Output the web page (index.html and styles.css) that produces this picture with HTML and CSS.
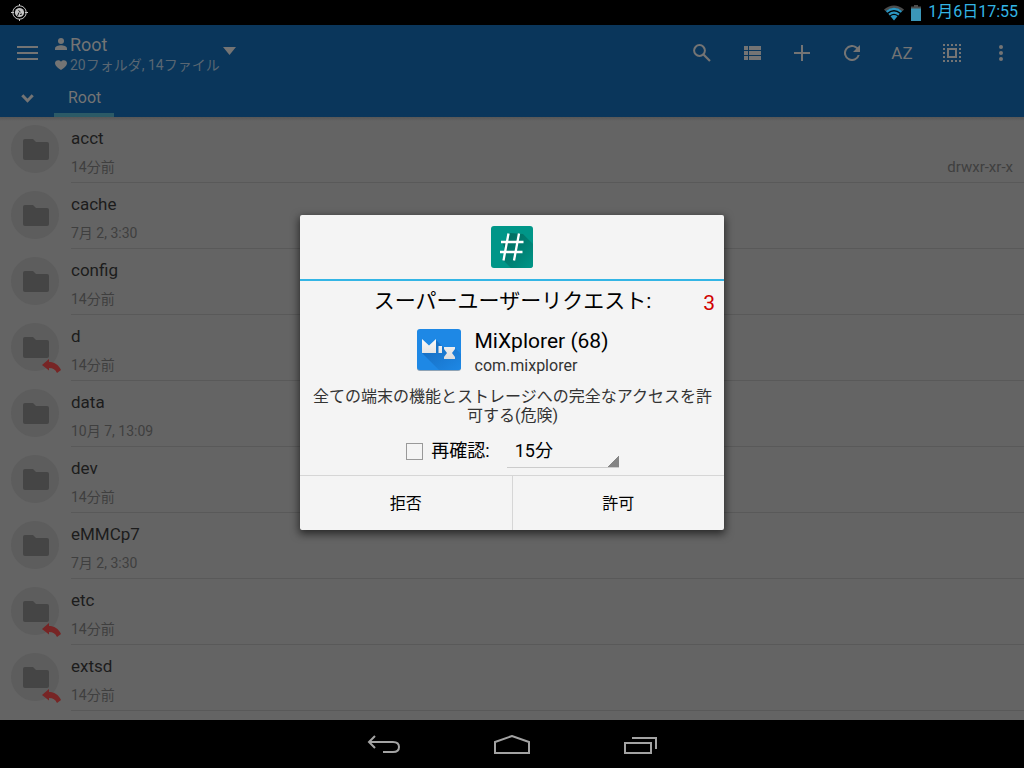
FILE: index.html
```
<!DOCTYPE html>
<html lang="ja">
<head>
<meta charset="utf-8">
<meta name="viewport" content="width=device-width, initial-scale=1">
<title>MiXplorer</title>
<link rel="stylesheet" href="styles.css">
</head>
<body>
<svg class="sprite" aria-hidden="true">
  <symbol id="folder" viewBox="0 0 26 21"><path d="M2 0h8l3 3h11q2 0 2 2v14q0 2-2 2H2q-2 0-2-2V2q0-2 2-2z"/></symbol>
  <symbol id="link" viewBox="0 0 19 14"><path d="M0 6 7 0v3c5 0 9.500 2.500 12 8l-4 3C13.500 10.500 11 9 7 9v2.500z"/></symbol>
</svg>

<header class="status">
  <svg class="status-logo" viewBox="0 0 17 17" fill="none" stroke="#c4c4c4"><circle cx="8.500" cy="8.500" r="6.700"/><path d="M0 8.500h3M14 8.500h3M8.500 0v2M8.500 15v2"/><circle cx="8.500" cy="8.500" r="4.600" fill="#c4c4c4" stroke="none"/><path d="M6.500 12 8 8.500M7.500 6.500l2 1.500M9 10.500l2-.5" stroke="#111"/></svg>
  <div class="status-right">
    <svg class="wifi" viewBox="0 0 20 16"><path d="M0 4.500Q10-3.500 20 4.500L18.500 6.300Q10 0 1.500 6.300z" fill="#4c4c4c"/><g fill="none" stroke="#2a95c0" stroke-width="2.200"><path d="M2.500 6.800q7.500-6 15 0M5 9.700q5-4 10 0"/></g><path d="M6.500 11.300q3.500-2.500 7 0L10 15.500z" fill="#2a95c0"/></svg>
    <svg class="battery" viewBox="0 0 10 16"><path d="M3 0h4v1.500h3V4H0V1.500h3z" fill="#4c4c4c"/><path d="M0 3.500h10V16H0z" fill="#3b96b8"/></svg>
    <time class="clock">1月6日17:55</time>
  </div>
</header>

<div class="stage">
  <main class="app">
    <div class="topbar">
      <div class="toolbar">
        <button class="menu" aria-label="メニュー"><svg viewBox="0 0 21 14" width="21" height="14"><path d="M0 0h21v2H0zM0 6h21v2H0zM0 12h21v2H0z"/></svg></button>
        <button class="location">
          <span class="location-lines">
            <span class="location-name"><svg viewBox="0 0 12 14" width="12" height="14"><circle cx="6" cy="3" r="3"/><path d="M0 12v-1.500C0 8.300 3.500 7.200 6 7.200s6 1.100 6 3.300V12z"/></svg>Root</span>
            <span class="location-info"><svg viewBox="0 0 12 10" width="12" height="10"><path d="M6 10C3 8 0 5.800 0 3 0 .2 4-1 6 1.700 8-1 12 .2 12 3c0 2.800-3 5-6 7z"/></svg>20フォルダ, 14ファイル</span>
          </span>
          <svg class="caret" viewBox="0 0 13 8" width="13" height="8"><path d="M0 0h13L6.500 8z"/></svg>
        </button>
        <div class="actions">
          <button aria-label="検索"><svg viewBox="0 0 18 18" width="18" height="18"><circle cx="6.500" cy="6.500" r="5.400" fill="none" stroke="currentColor" stroke-width="2"/><path d="m10.500 10.500 6.500 6.500" stroke="currentColor" stroke-width="2.200"/></svg></button>
          <button aria-label="表示"><svg viewBox="0 0 17 14" width="17" height="14"><path d="M0 0h4v4H0zM5 0h12v4H5zM0 5h4v4H0zM5 5h12v4H5zM0 10h4v4H0zM5 10h12v4H5z"/></svg></button>
          <button aria-label="追加"><svg viewBox="0 0 16 16" width="16" height="16"><path d="M7 0h2v7h7v2H9v7H7V9H0V7h7z"/></svg></button>
          <button aria-label="更新"><svg viewBox="4 4 16 16" width="16" height="16"><path d="M17.650 6.350A8 8 0 1 0 19.730 14h-2.080A6 6 0 1 1 12 6c1.660 0 3.140.69 4.220 1.780L13 11h7V4z"/></svg></button>
          <button class="sort" aria-label="並べ替え">AZ</button>
          <button aria-label="選択"><svg viewBox="0 0 18 18" width="18" height="18"><path d="M0 1h18M0 17h18" fill="none" stroke="currentColor" stroke-width="2" stroke-dasharray="2"/><path d="M1 4v12M17 4v12" fill="none" stroke="currentColor" stroke-width="2" stroke-dasharray="2"/><path d="M5 5h8v8H5z" fill="none" stroke="currentColor" stroke-width="2"/></svg></button>
          <button class="more" aria-label="その他"><svg viewBox="0 0 4 16" width="4" height="16"><circle cx="2" cy="2" r="2"/><circle cx="2" cy="8" r="2"/><circle cx="2" cy="14" r="2"/></svg></button>
        </div>
      </div>
      <nav class="tabs">
        <button class="expand" aria-label="タブ一覧"><svg viewBox="0 0 13 9" width="13" height="9"><path d="m1.300 1.300 5.200 5.400 5.200-5.400" fill="none" stroke="currentColor" stroke-width="3"/></svg></button>
        <a class="tab" href="#root">Root</a>
      </nav>
    </div>
    <ul class="files">
      <li class="file"><span class="badge"><svg class="folder"><use href="#folder"/></svg></span><div class="details"><span class="name">acct</span><div class="meta"><span>14分前</span><span class="mode">drwxr-xr-x</span></div></div></li>
      <li class="file"><span class="badge"><svg class="folder"><use href="#folder"/></svg></span><div class="details"><span class="name">cache</span><div class="meta"><span>7月 2, 3:30</span></div></div></li>
      <li class="file"><span class="badge"><svg class="folder"><use href="#folder"/></svg></span><div class="details"><span class="name">config</span><div class="meta"><span>14分前</span></div></div></li>
      <li class="file"><span class="badge"><svg class="folder"><use href="#folder"/></svg><svg class="link"><use href="#link"/></svg></span><div class="details"><span class="name">d</span><div class="meta"><span>14分前</span></div></div></li>
      <li class="file"><span class="badge"><svg class="folder"><use href="#folder"/></svg></span><div class="details"><span class="name">data</span><div class="meta"><span>10月 7, 13:09</span></div></div></li>
      <li class="file"><span class="badge"><svg class="folder"><use href="#folder"/></svg></span><div class="details"><span class="name">dev</span><div class="meta"><span>14分前</span></div></div></li>
      <li class="file"><span class="badge"><svg class="folder"><use href="#folder"/></svg></span><div class="details"><span class="name">eMMCp7</span><div class="meta"><span>7月 2, 3:30</span></div></div></li>
      <li class="file"><span class="badge"><svg class="folder"><use href="#folder"/></svg><svg class="link"><use href="#link"/></svg></span><div class="details"><span class="name">etc</span><div class="meta"><span>14分前</span></div></div></li>
      <li class="file"><span class="badge"><svg class="folder"><use href="#folder"/></svg><svg class="link"><use href="#link"/></svg></span><div class="details"><span class="name">extsd</span><div class="meta"><span>14分前</span></div></div></li>
    </ul>
  </main>

  <div class="overlay">
    <form class="dialog" role="dialog" aria-labelledby="request-title">
      <div class="dialog-head">
        <svg viewBox="0 0 42 42" width="42" height="42">
          <defs><linearGradient id="hash-shade" x1="0" y1="0" x2="1" y2="1"><stop offset=".2" stop-color="#00665a"/><stop offset="1" stop-color="#009688"/></linearGradient></defs>
          <rect width="42" height="42" rx="3" fill="#009688"/>
          <path d="M19 7 32 8 42 18v21q0 3-3 3H20L11 33l4-8-4-9h5z" fill="url(#hash-shade)" opacity=".8"/>
          <path d="M17.500 7.500 12.500 34.500M28 7.500 23 34.500M10 16h22.500M9 26h22.500" fill="none" stroke="#fff" stroke-width="2.300"/>
        </svg>
      </div>
      <div class="dialog-body">
        <div class="request">
          <h1 id="request-title">スーパーユーザーリクエスト:</h1>
          <span class="count">3</span>
        </div>
        <div class="requester">
          <svg viewBox="0 0 44 42" width="44" height="42">
            <defs>
              <linearGradient id="mix-shade" x1="0" y1="0" x2="1" y2="1"><stop offset=".2" stop-color="#166fc4"/><stop offset="1" stop-color="#1e88e5"/></linearGradient>
              <linearGradient id="mix-letters" x1="0" y1="0" x2="0" y2="1"><stop stop-color="#fafafa"/><stop offset="1" stop-color="#dcdcdc"/></linearGradient>
            </defs>
            <rect y="1" width="44" height="41" rx="3" fill="#8fa3b5"/>
            <rect width="44" height="41" rx="3" fill="#1e88e5"/>
            <path d="M19 11 26 18l12 1 6 6v13q0 3-3 3H22L5 24z" fill="url(#mix-shade)"/>
            <path d="M5 10 12 16.500 19 10v14H5zM21.500 17h3.500v7h-3.500zM27 18h11v2l-3 4 3 4v2H27v-2l3-4-3-4z" fill="url(#mix-letters)"/>
          </svg>
          <div><div class="app-name">MiXplorer (68)</div><div class="package">com.mixplorer</div></div>
        </div>
        <p class="message">全ての端末の機能とストレージへの完全なアクセスを許可する(危険)</p>
        <div class="options">
          <label class="confirm"><input type="checkbox">再確認:</label>
          <select class="duration" aria-label="期間"><option>15分</option></select>
        </div>
      </div>
      <div class="dialog-actions">
        <button type="button">拒否</button>
        <button type="button">許可</button>
      </div>
    </form>
  </div>
</div>

<footer class="navbar">
  <button aria-label="戻る"><svg viewBox="0 0 36 20" width="36" height="20"><path d="M9 1 3 7l6 6M3 7h24q6 0 6 5t-6 5H17"/></svg></button>
  <button aria-label="ホーム"><svg viewBox="0 0 36 20" width="36" height="20"><path d="M1 18V7l17-6 17 6v11z"/></svg></button>
  <button aria-label="履歴"><svg viewBox="0 0 36 20" width="36" height="20"><path d="M3 8h26v10H3zM10 3h24v11"/></svg></button>
</footer>
</body>
</html>
```
FILE: styles.css
```
* { box-sizing: border-box; }

body {
  margin: 0;
  height: 100vh;
  display: flex;
  flex-direction: column;
  background: #000;
  font-family: Roboto, "Noto Sans CJK JP", sans-serif;
  font-size: 16px;
  overflow: hidden;
}

button {
  border: 0;
  padding: 0;
  background: none;
  color: inherit;
  font: inherit;
}

svg { display: block; }
.sprite { display: none; }

/* System status bar */
.status {
  height: 25px;
  flex: none;
  display: flex;
  justify-content: space-between;
  align-items: center;
  padding: 0 6px 0 11px;
}
.status-logo { width: 17px; height: 17px; }
.status-right { display: flex; align-items: center; gap: 7px; }
.wifi { width: 20px; height: 16px; }
.battery { width: 10px; height: 16px; }
.clock { color: #33b5e5; line-height: 22px; height: 24px; }

.stage {
  flex: 1;
  min-height: 0;
  position: relative;
  display: flex;
}

/* File manager */
.app {
  flex: 1;
  overflow: hidden;
  background: #646464;
}
.topbar {
  background: #0a365b;
  color: #747474;
  fill: currentColor;
}
.toolbar { display: flex; height: 55px; align-items: center; }
.menu {
  width: 55px;
  height: 55px;
  padding: 0 0 0 17px;
}
.location { display: flex; align-items: center; gap: 3px; text-align: left; }
.location-lines { display: grid; padding-top: 5px; }
.location-name,
.location-info { display: flex; align-items: center; gap: 3px; line-height: 20px; }
.location-name { font-size: 18px; }
.location-info { font-size: 14px; color: #596672; }
.location-info svg { fill: #747474; }
.caret { margin-bottom: 4px; }
.actions { display: flex; margin-left: auto; }
.actions button {
  width: 50px;
  height: 55px;
  display: flex;
  align-items: center;
  justify-content: center;
}
.actions .sort { font-size: 17px; }
.actions .more { width: 47px; }

.tabs { display: flex; height: 37px; }
.expand {
  width: 54px;
  display: flex;
  align-items: center;
  justify-content: center;
}
.tab {
  padding: 0 13px 0 14px;
  border-bottom: 4px solid #2c5a66;
  color: inherit;
  line-height: 36px;
  text-decoration: none;
}

.files {
  margin: 0;
  padding: 0;
  list-style: none;
  background: linear-gradient(#575757, #646464 4px);
}
.file { display: flex; gap: 12px; padding-left: 11px; }
.badge {
  position: relative;
  width: 48px;
  height: 48px;
  margin-top: 8px;
  padding-left: 1px;
  border-radius: 50%;
  background: #5d5d5d;
  display: flex;
  align-items: center;
  justify-content: center;
}
.folder { width: 26px; height: 21px; fill: #454545; }
.link {
  position: absolute;
  right: -2px;
  bottom: -2px;
  width: 19px;
  height: 14px;
  fill: #772525;
}
.details {
  flex: 1;
  height: 66px;
  padding: 10px 11px 0 0;
  border-bottom: 1px solid #595959;
}
.name {
  display: block;
  margin-bottom: 7px;
  color: #1c1c1c;
  font-size: 17px;
  line-height: 22px;
}
.meta {
  display: flex;
  justify-content: space-between;
  color: #3f3f3f;
  font-size: 14px;
  line-height: 22px;
}
.mode { font-size: 15px; }

/* Superuser request */
.overlay {
  position: absolute;
  inset: 0;
  display: flex;
  align-items: center;
  justify-content: center;
}
.dialog {
  width: 424px;
  max-width: 100%;
  border-radius: 2px;
  background: #f4f4f4;
  box-shadow: 0 3px 8px 1px rgba(0, 0, 0, .6);
  color: #000;
}
.dialog-head {
  padding: 11px 0;
  border-bottom: 2px solid #33b5e5;
  display: flex;
  justify-content: center;
}
.dialog-body { padding: 0 9px 7px 10px; }
.request {
  display: grid;
  grid-template-columns: 1fr auto 1fr;
  font-size: 21px;
  line-height: 40px;
}
.request h1 {
  grid-column: 2;
  margin: 0;
  font-size: 21px;
  font-weight: 400;
}
.count { justify-self: end; color: #d00000; line-height: 44px; height: 40px; }
.requester {
  display: flex;
  justify-content: center;
  gap: 14px;
  padding-top: 7px;
}
.requester svg { margin-top: 1px; }
.app-name { font-size: 21px; line-height: 26px; }
.package { color: #333; line-height: 24px; }
.message {
  margin: 9px 0;
  color: #333;
  line-height: 19px;
  text-align: center;
}
.options {
  display: flex;
  justify-content: center;
  align-items: center;
  gap: 17px;
}
.confirm { display: flex; align-items: center; gap: 8px; font-size: 18px; line-height: 34px; }
.confirm input {
  appearance: none;
  width: 17px;
  height: 17px;
  margin: 0;
  border: 1px solid #999;
}
.duration {
  appearance: none;
  width: 112px;
  height: 34px;
  padding: 0 8px;
  border: 0;
  border-bottom: 1px solid #ccc;
  border-radius: 0;
  background: linear-gradient(135deg, transparent 50%, #858585 50%) right bottom / 12px 12px no-repeat border-box;
  color: #000;
  font-family: inherit;
  font-size: 18px;
}
.dialog-actions { display: flex; border-top: 1px solid #d6d6d6; }
.dialog-actions button { flex: 1; height: 54px; padding-bottom: 2px; }
.dialog-actions button + button { border-left: 1px solid #d6d6d6; }

/* System navigation bar */
.navbar {
  height: 48px;
  flex: none;
  display: flex;
  justify-content: center;
}
.navbar button {
  width: 128px;
  padding-top: 2px;
  display: flex;
  align-items: center;
  justify-content: center;
}
.navbar svg { fill: none; stroke: #a3a3a3; stroke-width: 2; }
```
